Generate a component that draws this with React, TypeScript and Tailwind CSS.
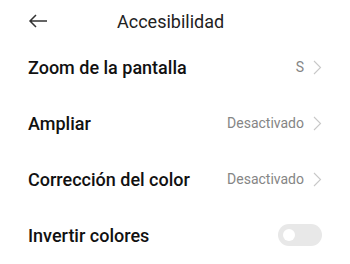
import React from "react";

const Chevron: React.FC = () => (
  <svg width="9" height="15" viewBox="0 0 9 15" className="ml-[9px]">
    <path d="M1 1l6.5 6.5L1 14" fill="none" stroke="#c8c8c8" strokeWidth="1.1" />
  </svg>
);

interface RowProps {
  label: string;
  value?: string;
  toggle?: boolean;
}

const Row: React.FC<RowProps> = ({ label, value, toggle }) => (
  <div className="flex items-center justify-between h-[56px] pl-[28px] pr-[28px]">
    <span className="text-[18px] font-medium text-[#111]">{label}</span>
    {toggle ? (
      <div className="w-[44px] h-[22px] rounded-full bg-[#e8e8e8] flex items-center pl-[5px]">
        <div className="w-[12px] h-[12px] rounded-full bg-white" />
      </div>
    ) : (
      <div className="flex items-center">
        <span className="text-[14px] text-[#858585]">{value}</span>
        <Chevron />
      </div>
    )}
  </div>
);

export default function App() {
  return (
    <div className="w-[350px] h-[264px] bg-white overflow-hidden font-['Roboto',sans-serif]">
      <div className="flex items-center h-[39px] pt-[3px] pl-[28px]">
        <svg width="20" height="14" viewBox="0 0 20 14">
          <path d="M19 7H2M8 1L2 7l6 6" fill="none" stroke="#333" strokeWidth="1.5" />
        </svg>
        <span className="ml-[69px] text-[18px] text-[#222]">Accesibilidad</span>
      </div>
      <div>
        <Row label="Zoom de la pantalla" value="S" />
        <Row label="Ampliar" value="Desactivado" />
        <Row label="Corrección del color" value="Desactivado" />
        <Row label="Invertir colores" toggle />
      </div>
    </div>
  );
}
